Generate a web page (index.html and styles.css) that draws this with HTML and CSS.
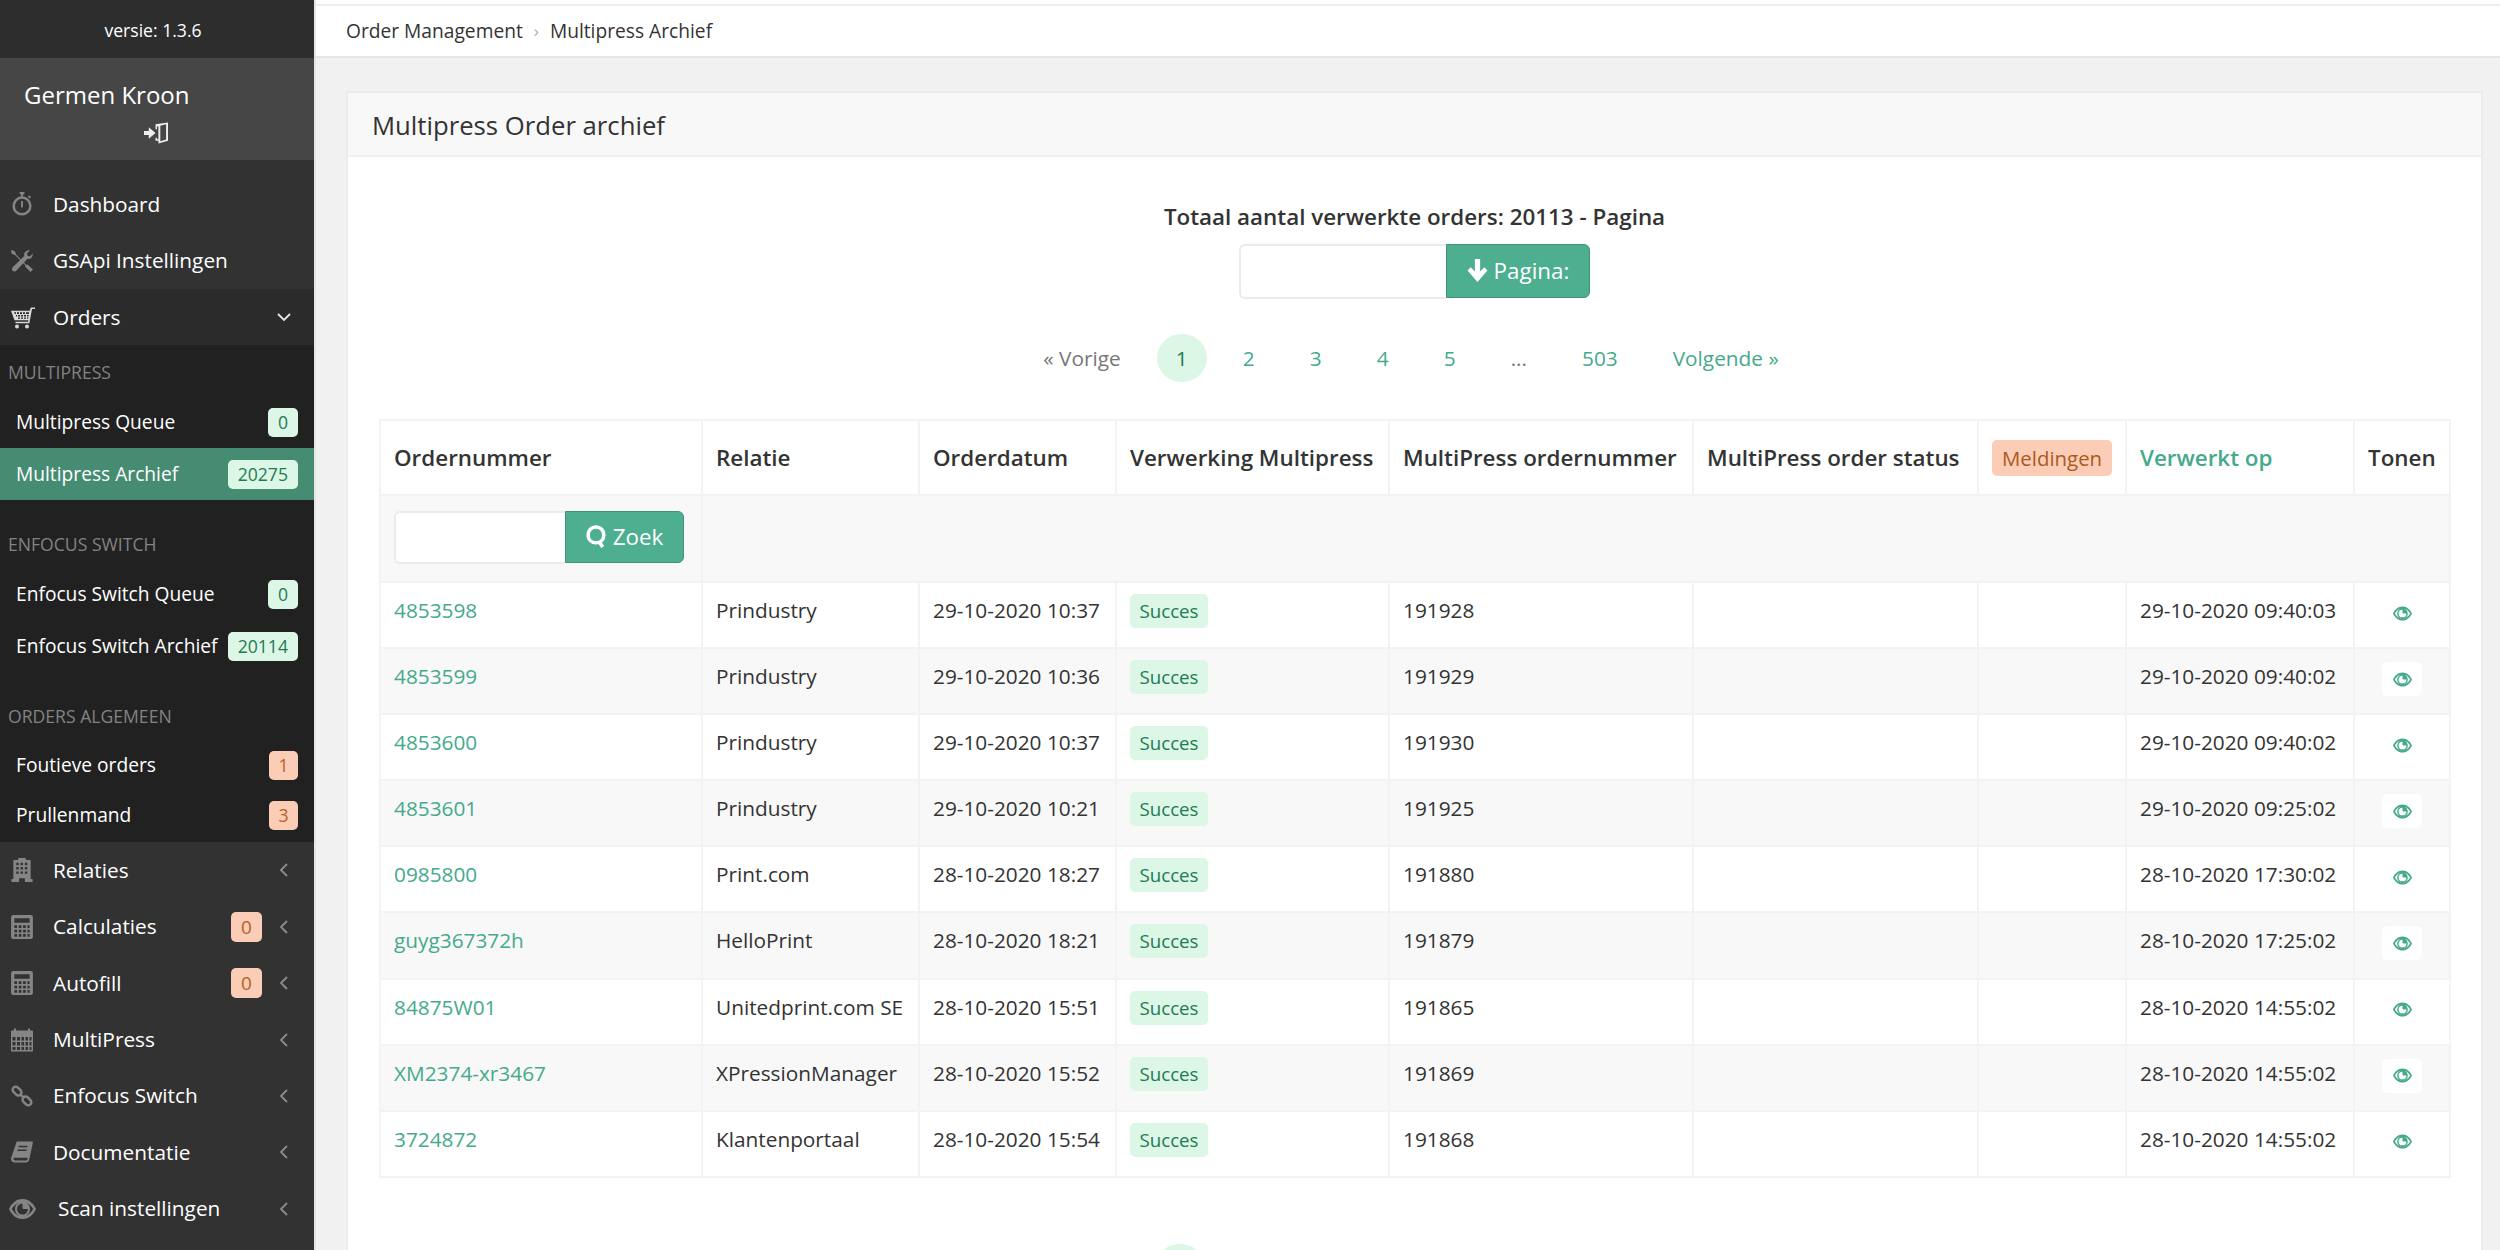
FILE: index.html
```html
<!DOCTYPE html>
<html lang="en">
<head>
    <meta charset="UTF-8">
    <title>Multipress Archief</title>
    <link rel="stylesheet" href="styles.css">
</head>
<body>
    <!-- Icon set -->
    <svg class="icon-defs" xmlns="http://www.w3.org/2000/svg">
        <symbol id="i-stopwatch" viewBox="0 0 22 25">
            <circle cx="11" cy="14.5" r="8.7" fill="none" stroke="currentColor" stroke-width="2.6"/>
            <path fill="currentColor" d="M8.500 0h5v2h-1.300v3h-2.400V2H8.500zM18.500 3.500l2 2-1.400 1.400-2-2zM10 9.500h2V15l-1 2-1-2z"/>
        </symbol>
        <symbol id="i-tools" viewBox="0 0 22 22">
            <path fill="currentColor" d="M1 0l3 1.500 1 3L15.500 15l1-.5L22 19.500 19.500 22l-5.500-5.500.5-1L4 5l-3-1-1-3z"/>
            <path fill="currentColor" d="M21.500 3.500c.6 2-.2 4-2 5-1 .5-2 .5-3 .2L5.500 20.500c-1 1.200-2.700 1.300-3.800.2-1-1-1-2.800.2-3.800L13.300 6c-.4-1.200-.2-2.500.5-3.500C15 .8 17-.2 19 .4l-3.200 3 .8 2.400 2.400.7z"/>
        </symbol>
        <symbol id="i-cart" viewBox="0 0 24 21">
            <path fill="currentColor" fill-rule="evenodd" d="M19.800 0H24v1.500h-3l-2.600 14.300H4.500v-1.500h12.600l.3-1.500H3.500L0 3.200h18.700zM3 4.800l1 1.700h1V4.800zM6 4.800v1.700h2V4.800zM9 4.800v1.700h2V4.800zM12 4.800v1.700h2V4.800zM15 4.800v1.700h2.800l.3-1.700zM5 7.500v1.500h1V7.500zM7 7.500v1.500h2V7.500zM10 7.500v1.500h2V7.500zM13 7.500v1.500h2V7.500zM16 7.500v1.500h1.500l.2-1.500zM7 10v1.300h2V10zM10 10v1.300h2V10zM13 10v1.300h2V10zM16 10v1.300h1.200l.2-1.300z"/>
            <circle cx="6" cy="19" r="2" fill="currentColor"/>
            <circle cx="16" cy="19" r="2" fill="currentColor"/>
        </symbol>
        <symbol id="i-building" viewBox="0 0 22 25">
            <path fill="currentColor" fill-rule="evenodd" d="M7 0h8v2h5v20h2v3h-8v-4H8v4H0v-3h2V2h5zM5 5v2.500h2.500V5zM9.500 5v2.500H12V5zM14 5v2.500h2.500V5zM5 9.500V12h2.500V9.500zM9.500 9.500V12H12V9.500zM14 9.500V12h2.500V9.500zM5 14v2.500h2.500V14zM9.500 14v2.500H12V14zM14 14v2.500h2.500V14z"/>
        </symbol>
        <symbol id="i-calculator" viewBox="0 0 20 22">
            <path fill="currentColor" fill-rule="evenodd" d="M2 0h16a2 2 0 0 1 2 2v18a2 2 0 0 1-2 2H2a2 2 0 0 1-2-2V2a2 2 0 0 1 2-2zM3 3v4h14V3zM3 9.500V12h2.500V9.500zM7 9.500V12h2.500V9.500zM11 9.500V12h2.500V9.500zM15 9.500V12h2V9.500zM3 13.500V16h2.500v-2.500zM7 13.500V16h2.500v-2.500zM11 13.500V16h2.500v-2.500zM15 13.500V16h2v-2.500zM3 17.500V20h2.500v-2.500zM7 17.500V20h2.500v-2.500zM11 17.500V20h2.500v-2.500zM15 17.500V20h2v-2.500z"/>
        </symbol>
        <symbol id="i-calendar" viewBox="0 0 22 23">
            <path fill="currentColor" fill-rule="evenodd" d="M3 0h2v2h12V0h2v2h2a1 1 0 0 1 1 1v19a1 1 0 0 1-1 1H1a1 1 0 0 1-1-1V3a1 1 0 0 1 1-1h2zM1.500 8.500V12h3V8.500zM6 8.500V12h3V8.500zM10.500 8.500V12h2.500V8.500zM14.500 8.500V12h2.500V8.500zM18.500 8.500V12h2V8.500zM1.500 13.500V17h3v-3.500zM6 13.500V17h3v-3.500zM10.500 13.500V17h2.500v-3.500zM14.500 13.500V17h2.500v-3.500zM18.500 13.500V17h2v-3.500zM1.500 18.500v3h3v-3zM6 18.500v3h3v-3zM10.500 18.500v3h2.500v-3zM14.500 18.500v3h2.500v-3zM18.500 18.500v3h2v-3z"/>
        </symbol>
        <symbol id="i-link" viewBox="0 0 20 20">
            <g fill="none" stroke="currentColor" stroke-width="2.200">
                <rect x="-4.500" y="-2.800" width="9" height="5.600" rx="2.800" transform="translate(5.500 5.500) rotate(45)"/>
                <rect x="-4.500" y="-2.800" width="9" height="5.600" rx="2.800" transform="translate(14.500 14.500) rotate(45)"/>
                <path d="M8 8l4 4"/>
            </g>
        </symbol>
        <symbol id="i-book" viewBox="0 0 21 20">
            <path fill="currentColor" fill-rule="evenodd" d="M5.500 0H20c.8 0 1 .6.800 1.300L17.500 17c-.3 1.800-1.500 3-3.500 3H3c-2 0-3-1.500-3-3.200 0-.8.200-1.500.5-2.300zM7.500 4l-.4 1.500h8.500L16 4zM6.500 7.500l-.4 1.500h8.500l.4-1.500zM3.500 15.500c-1.400 0-1.500 2.600.2 2.600H14c.8 0 1.500-.5 1.700-1.200l.3-1.400z"/>
        </symbol>
        <symbol id="i-eye" viewBox="0 0 27 20">
            <path fill="currentColor" fill-rule="evenodd" d="M13.500 0C20 0 25 5 27 10c-2 5-7 10-13.500 10S2 15 0 10C2 5 7 0 13.500 0zM2.800 10c2 3.600 5.800 7.400 10.700 7.400S22.200 13.600 24.200 10c-1.500-2.700-4-5.400-7.300-6.600a7.500 7.500 0 1 1-6.800 0C6.800 4.600 4.300 7.300 2.800 10zM13.500 4.500a5.500 5.500 0 1 0 5.500 5.500h-4.500a1 1 0 0 1-1-1z"/>
        </symbol>
        <symbol id="i-exit" viewBox="0 0 25 22">
            <path fill="currentColor" d="M0 9h5V5l7 6-7 6v-4H0z"/>
            <path fill="currentColor" fill-rule="evenodd" d="M12 2l13-2v19l-10 3v-3h-3v-3h1.500v1.500H15V4l-1.500.300V7H12zM17 3.500V19.500l6-1.800V2z"/>
        </symbol>
        <symbol id="i-chevron-left" viewBox="0 0 9 14">
            <path fill="none" stroke="currentColor" stroke-width="1.800" d="M8 1L2 7l6 6"/>
        </symbol>
        <symbol id="i-chevron-down" viewBox="0 0 14 9">
            <path fill="none" stroke="currentColor" stroke-width="1.800" d="M1 1l6 6 6-6"/>
        </symbol>
        <symbol id="i-arrow-down" viewBox="0 0 20 22">
            <path fill="currentColor" d="M7.500 0h5v12l4-4 3 3-9.500 11L.500 11l3-3 4 4z"/>
        </symbol>
        <symbol id="i-search" viewBox="0 0 20 22">
            <path fill="none" stroke="currentColor" stroke-width="3.400" d="M9.500 2C5 2 2 5 2 9.500S5 17 9.500 17 17 14 17 9.500 14 2 9.500 2zM12.500 16l3.500 5"/>
        </symbol>
    </svg>

    <div class="layout">
        <!-- Sidebar -->
        <aside class="sidebar">
            <div class="version">versie: 1.3.6</div>
            <div class="user-box">
                <div class="user-name">Germen Kroon</div>
                <svg class="user-exit"><use href="#i-exit"></use></svg>
            </div>

            <nav class="nav">
                <a class="nav-item"><svg class="nav-icon"><use href="#i-stopwatch"></use></svg><span class="nav-label">Dashboard</span></a>
                <a class="nav-item"><svg class="nav-icon"><use href="#i-tools"></use></svg><span class="nav-label">GSApi Instellingen</span></a>
                <a class="nav-item nav-open"><svg class="nav-icon"><use href="#i-cart"></use></svg><span class="nav-label">Orders</span><svg class="nav-chevron-down"><use href="#i-chevron-down"></use></svg></a>

                <div class="sub">
                    <div class="sub-group">
                        <div class="sub-label">MULTIPRESS</div>
                        <a class="sub-item"><span>Multipress Queue</span><span class="count count-green">0</span></a>
                        <a class="sub-item active"><span>Multipress Archief</span><span class="count count-green">20275</span></a>
                    </div>
                    <div class="sub-group">
                        <div class="sub-label">ENFOCUS SWITCH</div>
                        <a class="sub-item"><span>Enfocus Switch Queue</span><span class="count count-green">0</span></a>
                        <a class="sub-item"><span>Enfocus Switch Archief</span><span class="count count-green">20114</span></a>
                    </div>
                    <div class="sub-group">
                        <div class="sub-label">ORDERS ALGEMEEN</div>
                        <a class="sub-item"><span>Foutieve orders</span><span class="count count-orange">1</span></a>
                        <a class="sub-item"><span>Prullenmand</span><span class="count count-orange">3</span></a>
                    </div>
                </div>

                <a class="nav-item"><svg class="nav-icon"><use href="#i-building"></use></svg><span class="nav-label">Relaties</span><svg class="nav-chevron"><use href="#i-chevron-left"></use></svg></a>
                <a class="nav-item"><svg class="nav-icon"><use href="#i-calculator"></use></svg><span class="nav-label">Calculaties</span><span class="nav-count">0</span><svg class="nav-chevron"><use href="#i-chevron-left"></use></svg></a>
                <a class="nav-item"><svg class="nav-icon"><use href="#i-calculator"></use></svg><span class="nav-label">Autofill</span><span class="nav-count">0</span><svg class="nav-chevron"><use href="#i-chevron-left"></use></svg></a>
                <a class="nav-item"><svg class="nav-icon"><use href="#i-calendar"></use></svg><span class="nav-label">MultiPress</span><svg class="nav-chevron"><use href="#i-chevron-left"></use></svg></a>
                <a class="nav-item"><svg class="nav-icon"><use href="#i-link"></use></svg><span class="nav-label">Enfocus Switch</span><svg class="nav-chevron"><use href="#i-chevron-left"></use></svg></a>
                <a class="nav-item"><svg class="nav-icon"><use href="#i-book"></use></svg><span class="nav-label">Documentatie</span><svg class="nav-chevron"><use href="#i-chevron-left"></use></svg></a>
                <a class="nav-item nav-scan"><svg class="nav-icon"><use href="#i-eye"></use></svg><span class="nav-label">Scan instellingen</span><svg class="nav-chevron"><use href="#i-chevron-left"></use></svg></a>
            </nav>
        </aside>

        <!-- Main content -->
        <main class="main">
            <div class="topbar">
                <span>Order Management</span>
                <span class="crumb-sep">›</span>
                <span>Multipress Archief</span>
            </div>

            <div class="content">
                <section class="panel">
                    <div class="panel-head">Multipress Order archief</div>
                    <div class="panel-body">
                        <div class="total">Totaal aantal verwerkte orders: 20113 - Pagina</div>
                        <div class="page-jump">
                            <div class="input-group">
                                <input class="field field-page" type="text">
                                <button class="btn btn-page"><svg class="btn-icon"><use href="#i-arrow-down"></use></svg>Pagina:</button>
                            </div>
                        </div>

                        <div class="pagination">
                            <span class="page muted">« Vorige</span>
                            <a class="page current">1</a>
                            <a class="page">2</a>
                            <a class="page">3</a>
                            <a class="page">4</a>
                            <a class="page">5</a>
                            <span class="page muted">...</span>
                            <a class="page">503</a>
                            <a class="page">Volgende »</a>
                        </div>

                        <table class="orders">
                            <colgroup>
                                <col class="c-nr"><col class="c-rel"><col class="c-date"><col class="c-state">
                                <col class="c-mpnr"><col class="c-mpstatus"><col class="c-msg"><col class="c-done"><col class="c-show">
                            </colgroup>
                            <thead>
                                <tr>
                                    <th>Ordernummer</th>
                                    <th>Relatie</th>
                                    <th>Orderdatum</th>
                                    <th>Verwerking Multipress</th>
                                    <th>MultiPress ordernummer</th>
                                    <th>MultiPress order status</th>
                                    <th class="th-badge"><span class="tag-orange">Meldingen</span></th>
                                    <th class="sorted">Verwerkt op</th>
                                    <th>Tonen</th>
                                </tr>
                            </thead>
                            <tbody>
                                <tr class="filter-row">
                                    <td>
                                        <div class="input-group">
                                            <input class="field field-search" type="text">
                                            <button class="btn btn-search"><svg class="btn-icon"><use href="#i-search"></use></svg>Zoek</button>
                                        </div>
                                    </td>
                                    <td colspan="8"></td>
                                </tr>
                                <tr>
                                    <td><a class="link">4853598</a></td><td>Prindustry</td><td>29-10-2020 10:37</td><td><span class="tag-green">Succes</span></td><td>191928</td><td></td><td></td><td>29-10-2020 09:40:03</td>
                                    <td class="show"><a class="eye-btn"><svg class="eye"><use href="#i-eye"></use></svg></a></td>
                                </tr>
                                <tr>
                                    <td><a class="link">4853599</a></td><td>Prindustry</td><td>29-10-2020 10:36</td><td><span class="tag-green">Succes</span></td><td>191929</td><td></td><td></td><td>29-10-2020 09:40:02</td>
                                    <td class="show"><a class="eye-btn"><svg class="eye"><use href="#i-eye"></use></svg></a></td>
                                </tr>
                                <tr>
                                    <td><a class="link">4853600</a></td><td>Prindustry</td><td>29-10-2020 10:37</td><td><span class="tag-green">Succes</span></td><td>191930</td><td></td><td></td><td>29-10-2020 09:40:02</td>
                                    <td class="show"><a class="eye-btn"><svg class="eye"><use href="#i-eye"></use></svg></a></td>
                                </tr>
                                <tr>
                                    <td><a class="link">4853601</a></td><td>Prindustry</td><td>29-10-2020 10:21</td><td><span class="tag-green">Succes</span></td><td>191925</td><td></td><td></td><td>29-10-2020 09:25:02</td>
                                    <td class="show"><a class="eye-btn"><svg class="eye"><use href="#i-eye"></use></svg></a></td>
                                </tr>
                                <tr>
                                    <td><a class="link">0985800</a></td><td>Print.com</td><td>28-10-2020 18:27</td><td><span class="tag-green">Succes</span></td><td>191880</td><td></td><td></td><td>28-10-2020 17:30:02</td>
                                    <td class="show"><a class="eye-btn"><svg class="eye"><use href="#i-eye"></use></svg></a></td>
                                </tr>
                                <tr>
                                    <td><a class="link">guyg367372h</a></td><td>HelloPrint</td><td>28-10-2020 18:21</td><td><span class="tag-green">Succes</span></td><td>191879</td><td></td><td></td><td>28-10-2020 17:25:02</td>
                                    <td class="show"><a class="eye-btn"><svg class="eye"><use href="#i-eye"></use></svg></a></td>
                                </tr>
                                <tr>
                                    <td><a class="link">84875W01</a></td><td>Unitedprint.com SE</td><td>28-10-2020 15:51</td><td><span class="tag-green">Succes</span></td><td>191865</td><td></td><td></td><td>28-10-2020 14:55:02</td>
                                    <td class="show"><a class="eye-btn"><svg class="eye"><use href="#i-eye"></use></svg></a></td>
                                </tr>
                                <tr>
                                    <td><a class="link">XM2374-xr3467</a></td><td>XPressionManager</td><td>28-10-2020 15:52</td><td><span class="tag-green">Succes</span></td><td>191869</td><td></td><td></td><td>28-10-2020 14:55:02</td>
                                    <td class="show"><a class="eye-btn"><svg class="eye"><use href="#i-eye"></use></svg></a></td>
                                </tr>
                                <tr>
                                    <td><a class="link">3724872</a></td><td>Klantenportaal</td><td>28-10-2020 15:54</td><td><span class="tag-green">Succes</span></td><td>191868</td><td></td><td></td><td>28-10-2020 14:55:02</td>
                                    <td class="show"><a class="eye-btn"><svg class="eye"><use href="#i-eye"></use></svg></a></td>
                                </tr>
                            </tbody>
                        </table>

                        <!-- Only the top of the lower pager is in view -->
                        <div class="pagination pagination-bottom">
                            <span class="page current"></span>
                        </div>
                    </div>
                </section>
            </div>
        </main>
    </div>
</body>
</html>
```

FILE: styles.css
```css
* {
    margin: 0;
    padding: 0;
    box-sizing: border-box;
}

html, body {
    height: 100%;
    overflow: hidden;
}

body {
    font-family: "Open Sans", "Liberation Sans", sans-serif;
    font-size: 20.8px;
    line-height: 1.5;
    color: #333333;
    background-color: #f1f1f1;
}

a {
    text-decoration: none;
}

.icon-defs {
    position: absolute;
    width: 0;
    height: 0;
}

.layout {
    display: flex;
    height: 1250px;
}

/* Sidebar */
.sidebar {
    width: 314px;
    flex-shrink: 0;
    background-color: #323232;
    color: #ffffff;
}

.version {
    height: 58px;
    padding-right: 8px;
    background-color: #2d2d2d;
    font-size: 17.6px;
    line-height: 60px;
    text-align: center;
}

.user-box {
    height: 102px;
    padding: 15px 24px 0;
    background-color: #464646;
}

.user-name {
    font-size: 24px;
    line-height: 44px;
}

.user-exit {
    display: block;
    width: 24px;
    height: 22px;
    margin: 5px 0 0 120px;
    color: #eeeeee;
}

.nav {
    padding-top: 16px;
}

.nav-item {
    display: flex;
    align-items: center;
    height: 56.4px;
    padding: 0 0 0 11px;
    color: #ffffff;
}

.nav-open {
    background-color: #2b2b2b;
    padding-top: 2px;
}

.nav-icon {
    width: 22px;
    height: 24px;
    flex-shrink: 0;
    color: #858585;
}

.nav-open .nav-icon {
    width: 24px;
    color: #d8d8d8;
}

.nav-label {
    flex: 1;
    margin-left: 20px;
}

.nav-open .nav-label {
    margin-left: 18px;
}

.nav-scan {
    padding-left: 9px;
}

.nav-scan .nav-icon {
    width: 27px;
}

.nav-scan .nav-label {
    margin-left: 22px;
}

.nav-count {
    width: 31px;
    height: 30px;
    margin-right: 17px;
    border-radius: 5px;
    background-color: #fccdb6;
    color: #b5611f;
    font-size: 19px;
    line-height: 30px;
    text-align: center;
}

.nav-chevron {
    width: 9px;
    height: 14px;
    margin-right: 26px;
    color: #8c8c8c;
}

.nav-chevron-down {
    width: 14px;
    height: 9px;
    margin-right: 23px;
    color: #e6e6e6;
}

.sub {
    height: 497px;
    padding-top: 7px;
    background-color: #212121;
}

.sub-group {
    margin-bottom: 24px;
}

.sub-group:last-child {
    margin-bottom: 0;
}

.sub-label {
    height: 40px;
    margin-bottom: 4px;
    padding-left: 8px;
    color: #838383;
    font-size: 17.6px;
    line-height: 40px;
}

.sub-item {
    display: flex;
    align-items: center;
    justify-content: space-between;
    height: 52px;
    padding: 0 16px;
    color: #ffffff;
    font-size: 19.2px;
}

.sub-group:last-child .sub-item {
    height: 50px;
}

.sub-item.active {
    background-color: #458c73;
}

.count {
    min-width: 29px;
    height: 29px;
    padding: 0 10px;
    border-radius: 5px;
    font-size: 17.6px;
    line-height: 29px;
    text-align: center;
}

.count-green {
    background-color: #dcf7e5;
    color: #1f7a56;
}

.count-orange {
    padding: 0;
    background-color: #fccdb6;
    color: #b5611f;
}

/* Main */
.main {
    flex: 1;
    min-width: 0;
    border-left: 2px solid #e6e6e6;
}

.topbar {
    display: flex;
    align-items: center;
    gap: 11px;
    height: 58px;
    padding: 6px 0 0 30px;
    border-bottom: 2px solid #e6e6e6;
    background: linear-gradient(#ffffff 4px, #eeeeee 4px, #eeeeee 6px, #ffffff 6px);
    font-size: 19.2px;
}

.crumb-sep {
    color: #aaaaaa;
    font-size: 17px;
}

.content {
    padding: 33px 17px 0 30px;
}

.panel {
    border: 2px solid #ececec;
    background-color: #ffffff;
}

.panel-head {
    height: 64px;
    padding: 0 24px;
    border-bottom: 2px solid #f0f0f0;
    background-color: #f8f8f8;
    font-size: 25.7px;
    line-height: 66px;
}

.panel-body {
    padding: 44px 31px 0;
}

.total {
    font-size: 22.4px;
    font-weight: 600;
    line-height: 31px;
    text-align: center;
}

.page-jump {
    display: flex;
    justify-content: center;
    margin-top: 12px;
}

.input-group {
    display: flex;
}

.field {
    border: 2px solid #ebebeb;
    border-right: 0;
    border-radius: 6px 0 0 6px;
    background-color: #ffffff;
}

.field-page {
    width: 207px;
    height: 55px;
}

.field-search {
    width: 171px;
    height: 53px;
}

.btn {
    display: flex;
    align-items: center;
    justify-content: center;
    gap: 6px;
    padding-bottom: 2px;
    border: 1px solid #3f9379;
    border-radius: 0 6px 6px 0;
    background-color: #4dae90;
    color: #ffffff;
    font-family: inherit;
    font-size: 22.4px;
}

.btn-icon {
    width: 21px;
    height: 23px;
    flex-shrink: 0;
}

.btn-page {
    width: 144px;
    height: 54px;
}

.btn-search {
    width: 119px;
    height: 52px;
}

.pagination {
    display: flex;
    justify-content: center;
    gap: 17px;
    height: 48px;
    margin-top: 35px;
    padding-right: 7px;
}

.page {
    min-width: 50px;
    padding: 0 19px;
    border-radius: 50%;
    color: #45aa8b;
    line-height: 48px;
    text-align: center;
}

.page.muted {
    color: #777777;
}

.page.current {
    background-color: #dcf7e5;
    color: #1f7a56;
}

.pagination-bottom {
    justify-content: flex-start;
    margin: 66px 0 0 776px;
}

/* Orders table */
.orders {
    width: 2070px;
    margin-top: 37px;
    table-layout: fixed;
    border-collapse: collapse;
}

.c-nr { width: 322px; }
.c-rel { width: 217px; }
.c-date { width: 197px; }
.c-state { width: 273px; }
.c-mpnr { width: 304px; }
.c-mpstatus { width: 285px; }
.c-msg { width: 148px; }
.c-done { width: 228px; }
.c-show { width: 96px; }

.orders th,
.orders td {
    border: 2px solid #f3f3f3;
    padding: 0 13px;
    text-align: left;
    white-space: nowrap;
}

.orders th {
    height: 75px;
    font-size: 22.4px;
    font-weight: 600;
    vertical-align: middle;
}

.orders td {
    height: 66.1px;
    padding-top: 12px;
    vertical-align: top;
}

.orders tbody tr:nth-child(even) {
    background-color: #ffffff;
}

.orders tbody tr:nth-child(odd) {
    background-color: #f8f8f8;
}

.orders .filter-row td {
    height: 87px;
    padding-top: 15px;
}

.orders .th-badge {
    padding-right: 0;
}

.tag-orange {
    display: inline-block;
    height: 36px;
    padding: 0 10px;
    border-radius: 5px;
    background-color: #fccdb6;
    color: #a85a20;
    font-size: 20.4px;
    font-weight: 400;
    line-height: 36px;
}

.tag-green {
    display: inline-block;
    height: 34px;
    padding: 0 9.5px;
    border-radius: 5px;
    background-color: #dcf7e5;
    color: #1f7a56;
    font-size: 18.7px;
    line-height: 34px;
    vertical-align: top;
    margin-top: -1px;
}

.sorted {
    color: #45aa8b;
}

.link {
    color: #45aa8b;
}

.orders .show {
    padding: 13px 0 0;
    text-align: center;
}

.eye-btn {
    display: inline-flex;
    align-items: center;
    justify-content: center;
    width: 40px;
    height: 34px;
    border-radius: 5px;
    background-color: #ffffff;
    color: #45aa8b;
}

.eye {
    width: 19px;
    height: 15px;
}
```
